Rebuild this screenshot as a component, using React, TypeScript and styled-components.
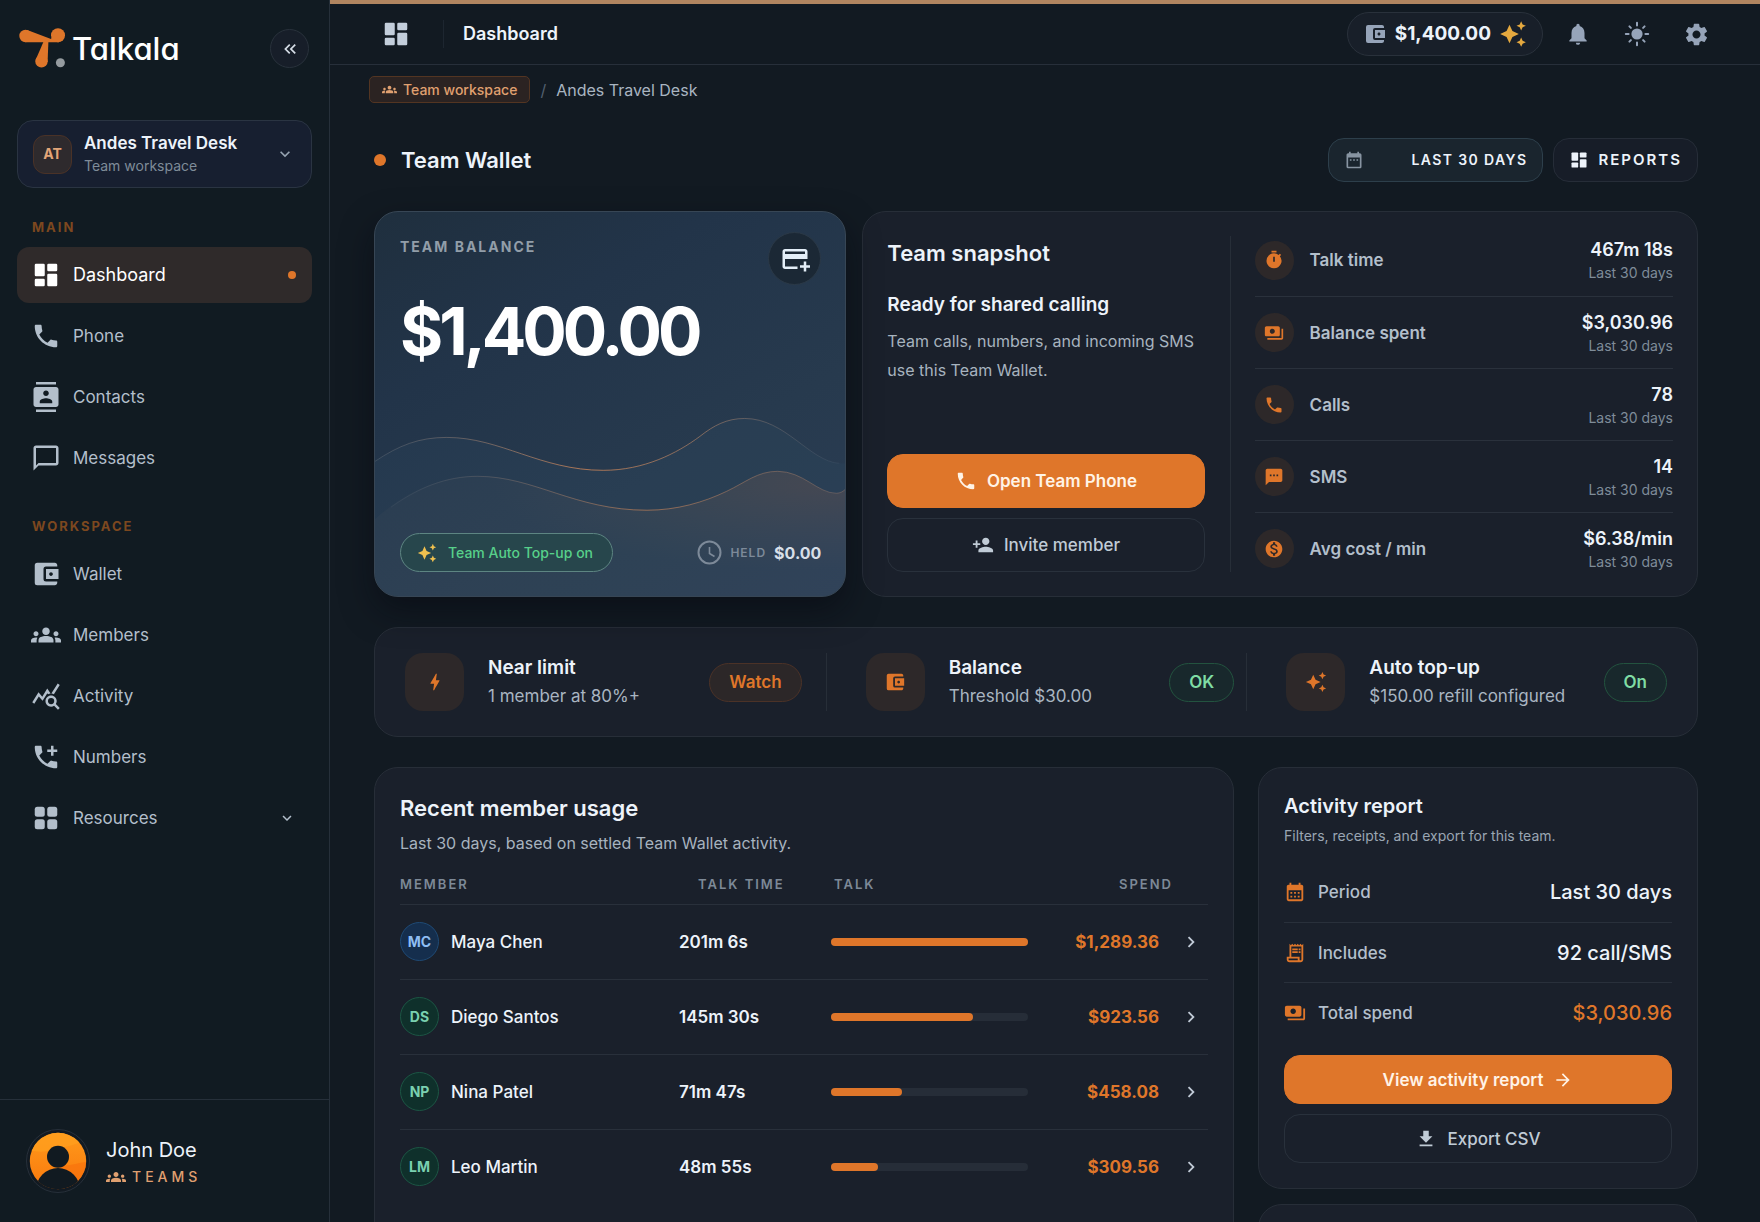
import React from "react";
import styled, { createGlobalStyle, css } from "styled-components";
import {
  MdAccountBalanceWallet,
  MdAddIcCall,
  MdArrowForward,
  MdAutoAwesome,
  MdBolt,
  MdCalendarMonth,
  MdChevronRight,
  MdContacts,
  MdDateRange,
  MdDownload,
  MdGroups,
  MdKeyboardArrowDown,
  MdKeyboardDoubleArrowLeft,
  MdMonetizationOn,
  MdNotifications,
  MdOutlineAddCard,
  MdOutlineChatBubbleOutline,
  MdOutlineReceiptLong,
  MdPayments,
  MdPersonAdd,
  MdPhone,
  MdQueryStats,
  MdSettings,
  MdSms,
  MdTimer,
} from "react-icons/md";

const c = {
  page: "#121a22",
  side: "#111b22",
  card: "#1a202b",
  line: "rgba(148, 163, 184, 0.16)",
  orange: "#df762a",
  peach: "#e0a070",
  white: "#edf3fa",
  text: "#b3bfcb",
  mute: "#7f8c99",
  warm: "#2d2829",
};

const GlobalStyle = createGlobalStyle`
  *, *::before, *::after { box-sizing: border-box; }
  body {
    margin: 0;
    background: ${c.page};
    color: ${c.white};
    font-family: Inter, "Liberation Sans", sans-serif;
    font-size: 16px;
    line-height: 24px;
    -webkit-font-smoothing: antialiased;
  }
  button, select { font: inherit; color: inherit; cursor: pointer; }
  h1, h2, h3, p, ul { margin: 0; padding: 0; }
  ul { list-style: none; }
  a { color: inherit; text-decoration: none; }
  svg { flex: none; display: block; }
`;

const Shell = styled.div`
  display: flex;
  height: 100vh;
  overflow: hidden;
`;

/* ---------- sidebar ---------- */

const Sidebar = styled.aside`
  width: 330px;
  flex: none;
  display: flex;
  flex-direction: column;
  background: ${c.side};
  border-right: 1px solid ${c.line};
`;

const Brand = styled.div`
  display: flex;
  align-items: center;
  justify-content: space-between;
  padding: 28px 20px 0 19px;
`;

const BrandLink = styled.a`
  display: flex;
  align-items: center;
  gap: 5px;
  font-size: 31px;
  line-height: 40px;
  font-weight: 500;
  color: #fff;
  font-feature-settings: "cv11";
`;

const Collapse = styled.button`
  width: 39px;
  height: 39px;
  padding: 0;
  display: grid;
  place-items: center;
  border-radius: 50%;
  border: 1px solid #29323c;
  background: #171e29;
  color: #d5dde6;
`;

const Workspace = styled.button`
  display: flex;
  align-items: center;
  gap: 12px;
  margin: 51px 17px 0;
  height: 68px;
  padding: 0 16px 0 15px;
  border-radius: 16px;
  border: 1px solid #2a3442;
  background: #171f30;
  text-align: left;
`;

const Initials = styled.span`
  width: 39px;
  height: 39px;
  display: grid;
  place-items: center;
  border-radius: 12px;
  border: 1px solid #4a3227;
  background: #2e2a2d;
  color: #e2a578;
  font-size: 14px;
  font-weight: 700;
`;

const WorkspaceText = styled.span`
  flex: 1;
  display: flex;
  flex-direction: column;
  font-size: 14px;
  line-height: 22px;
  color: ${c.mute};
  strong {
    font-size: 17px;
    line-height: 24px;
    font-weight: 600;
    color: ${c.white};
  }
`;

const NavLabel = styled.h2`
  padding: 0 32px;
  font-size: 13px;
  line-height: 20px;
  font-weight: 700;
  letter-spacing: 2px;
  text-transform: uppercase;
  color: #7d481f;
`;

const Nav = styled.nav`
  flex: 1;
  padding-top: 29px;
`;

const NavList = styled.ul`
  display: grid;
  gap: 5px;
  padding: 10px 17px 30px;
`;

const NavItem = styled.a<{ $active?: boolean }>`
  display: flex;
  align-items: center;
  gap: 12px;
  height: 56px;
  padding: 0 16px 0 14px;
  border-radius: 12px;
  font-size: ${(p) => (p.$active ? 18 : 17)}px;
  color: ${(p) => (p.$active ? "#fff" : c.text)};
  background: ${(p) => (p.$active ? "#2f2a2a" : "transparent")};
  span { flex: 1; }
`;

const Dot = styled.i<{ $size: number }>`
  width: ${(p) => p.$size}px;
  height: ${(p) => p.$size}px;
  border-radius: 50%;
  background: ${c.orange};
`;

const Profile = styled.div`
  display: flex;
  align-items: center;
  gap: 16px;
  height: 123px;
  padding: 0 26px;
  border-top: 1px solid ${c.line};
`;

const ProfileText = styled.div`
  padding-top: 3px;
  font-size: 20px;
  line-height: 28px;
  p {
    display: flex;
    align-items: center;
    gap: 6px;
    font-size: 14px;
    line-height: 26px;
    font-weight: 500;
    letter-spacing: 4px;
    color: ${c.peach};
  }
`;

/* ---------- top bar ---------- */

const Main = styled.main`
  flex: 1;
  min-width: 0;
  display: flex;
  flex-direction: column;
  border-top: 4px solid #b08560;
`;

const TopBar = styled.header`
  display: flex;
  align-items: center;
  flex: none;
  height: 61px;
  padding: 0 40px 0 38px;
  border-bottom: 1px solid ${c.line};
`;

const IconButton = styled.button<{ $w: number; $bright?: boolean }>`
  width: ${(p) => p.$w}px;
  height: 48px;
  padding: 0;
  display: grid;
  place-items: center;
  border: 0;
  background: none;
  color: ${(p) => (p.$bright ? "#c3cedb" : "#96a4b9")};
`;

const PageName = styled.div`
  flex: 1;
  margin-left: 19px;
  padding-left: 19px;
  border-left: 1px solid #1d2630;
  font-size: 18px;
  line-height: 28px;
  font-weight: 600;
`;

const TopActions = styled.div`
  display: flex;
  align-items: center;
  gap: 11px;
`;

const Funds = styled.button`
  display: flex;
  align-items: center;
  gap: 8px;
  height: 44px;
  padding: 0 15px;
  border-radius: 22px;
  border: 1px solid #29313b;
  background: #181f29;
  font-size: 19px;
  font-weight: 700;
  svg:first-child { color: #96a4b9; }
  svg:last-child { color: #e5a93f; }
`;

/* ---------- page ---------- */

const Scroll = styled.div`
  flex: 1;
  overflow-y: auto;
  scrollbar-width: none;
  padding: 11px 62px 0 44px;
`;

const Crumbs = styled.nav`
  display: flex;
  align-items: center;
  gap: 10px;
  margin-left: -5px;
  color: #a9b5c1;
  > span { color: #536070; }
`;

const CrumbChip = styled.a`
  display: flex;
  align-items: center;
  gap: 6px;
  height: 27px;
  padding: 0 12px;
  border-radius: 5px;
  border: 1px solid #533522;
  background: #2b2322;
  color: ${c.peach};
  font-size: 14px;
  font-weight: 500;
`;

const TitleRow = styled.div`
  display: flex;
  align-items: center;
  gap: 10px;
  margin: 35px 0 29px;
  h1 {
    flex: 1;
    margin-left: 5px;
    font-size: 22px;
    line-height: 32px;
    font-weight: 600;
  }
`;

const pillBox = css`
  display: flex;
  align-items: center;
  height: 44px;
  padding: 0 15px;
  border-radius: 16px;
  font-weight: 600;
  letter-spacing: 2px;
`;

const Range = styled.label`
  ${pillBox}
  width: 215px;
  border: 1px solid #2d3f4b;
  background: #1a252e;
  color: #8794a1;
  select {
    flex: 1;
    min-width: 0;
    padding: 0;
    border: 0;
    appearance: none;
    background: none;
    color: ${c.white};
    font-size: 14px;
    letter-spacing: 0.1em;
    text-align-last: right;
    text-transform: uppercase;
  }
`;

const Reports = styled.button`
  ${pillBox}
  gap: 9px;
  border: 1px solid #262d38;
  background: #171d28;
  font-size: 15px;
  text-transform: uppercase;
`;

const Card = styled.section`
  border: 1px solid #272e38;
  border-radius: 24px;
  background: ${c.card};
`;

const TopGrid = styled.div`
  display: grid;
  grid-template-columns: minmax(0, 13fr) minmax(0, 23fr);
  gap: 16px;
`;

const BalanceCard = styled.section`
  position: relative;
  display: flex;
  flex-direction: column;
  padding: 20px 24px 24px 25px;
  border-radius: 24px;
  border: 1px solid #374655;
  background: linear-gradient(150deg, #1f2f3e 0%, #223449 30%, #273a4e 65%, #2b3d54 100%);
  box-shadow: 0 14px 32px rgba(5, 8, 16, 0.5);
`;

const Waves = styled.svg`
  position: absolute;
  inset: 0;
  width: 100%;
  height: 100%;
  border-radius: 23px;
  pointer-events: none;
`;

const BalanceTop = styled.div`
  display: flex;
  justify-content: space-between;
  h2 {
    padding-top: 5px;
    font-size: 14px;
    line-height: 20px;
    font-weight: 700;
    letter-spacing: 2px;
    text-transform: uppercase;
    color: #929ea9;
  }
`;

const AddCard = styled.button`
  width: 53px;
  height: 53px;
  padding: 0;
  display: grid;
  place-items: center;
  border-radius: 50%;
  border: 1px solid #2b3947;
  background: #1b2835;
  color: #e3eef8;
`;

const Amount = styled.p`
  flex: 1;
  padding-top: 6px;
  font-size: 66px;
  line-height: 80px;
  font-weight: 700;
  letter-spacing: -4px;
  color: #fff;
`;

const BalanceFoot = styled.div`
  position: relative;
  display: flex;
  align-items: center;
  justify-content: space-between;
`;

const AutoChip = styled.span`
  display: flex;
  align-items: center;
  gap: 11px;
  height: 39px;
  padding: 0 19px 0 16px;
  border-radius: 20px;
  border: 1px solid #5d8582;
  background: #27464c;
  color: #57d08a;
  font-size: 14px;
  font-weight: 500;
  svg { color: #efc04f; }
`;

const Held = styled.span`
  display: flex;
  align-items: center;
  gap: 8px;
  font-size: 12px;
  font-weight: 600;
  letter-spacing: 1px;
  color: #7d8a99;
  strong {
    font-size: 16px;
    font-weight: 700;
    letter-spacing: 0;
    color: #d7dfe8;
  }
`;

const Snapshot = styled(Card)`
  display: grid;
  grid-template-columns: minmax(0, 343fr) minmax(0, 442fr);
  padding: 24px;
`;

const SnapIntro = styled.div`
  display: flex;
  flex-direction: column;
  padding-right: 25px;
  border-right: 1px solid #272e38;
  h2 { font-size: 22px; line-height: 34px; font-weight: 600; }
  h3 { margin-top: 21px; font-size: 19px; line-height: 28px; font-weight: 600; }
  p { flex: 1; margin-top: 8px; font-size: 16px; line-height: 29px; color: #a7b3bf; }
`;

const Action = styled.button<{ $primary?: boolean; $h: number }>`
  display: flex;
  align-items: center;
  justify-content: center;
  gap: 10px;
  width: 100%;
  height: ${(p) => p.$h}px;
  margin-top: 10px;
  border-radius: 16px;
  font-size: 17px;
  font-weight: ${(p) => (p.$primary ? 600 : 500)};
  border: 1px solid ${(p) => (p.$primary ? c.orange : "#29313c")};
  background: ${(p) => (p.$primary ? c.orange : "transparent")};
  color: ${(p) => (p.$primary ? "#fff3e6" : "#c0cbd6")};
`;

const StatList = styled.ul`
  padding-left: 24px;
`;

const Stat = styled.li`
  display: flex;
  align-items: center;
  gap: 16px;
  height: 72px;
  font-size: 17px;
  font-weight: 600;
  color: ${c.text};
  & + & { border-top: 1px solid #2a313c; }
  &:first-child { height: 60px; padding-bottom: 12px; }
  &:last-child { height: 60px; padding-top: 12px; }
  > span { flex: 1; }
`;

const RoundIcon = styled.i`
  width: 39px;
  height: 39px;
  flex: none;
  display: grid;
  place-items: center;
  border-radius: 50%;
  background: ${c.warm};
  color: ${c.orange};
`;

const StatValue = styled.div`
  text-align: right;
  font-size: 14px;
  line-height: 20px;
  font-weight: 400;
  color: ${c.mute};
  strong {
    display: block;
    font-size: 18px;
    line-height: 26px;
    font-weight: 600;
    color: ${c.white};
  }
`;

/* ---------- status strip ---------- */

const Strip = styled(Card)`
  display: grid;
  grid-template-columns: minmax(0, 71fr) minmax(0, 70fr) minmax(0, 71fr);
  margin: 30px 0;
  padding: 25px 24px;
`;

const StripItem = styled.div`
  display: flex;
  align-items: center;
  gap: 24px;
  padding: 0 24px 0 39px;
  & + & { border-left: 1px solid #272e38; }
  &:first-child { padding-left: 6px; }
  &:nth-child(2) { padding-right: 12px; }
  &:last-child { padding-right: 6px; }
`;

const SquareIcon = styled.i`
  width: 59px;
  height: 58px;
  flex: none;
  display: grid;
  place-items: center;
  border-radius: 18px;
  background: ${c.warm};
  color: ${c.orange};
`;

const StripText = styled.div`
  flex: 1;
  white-space: nowrap;
  font-size: 17px;
  line-height: 28px;
  color: #a9b5c1;
  h3 { font-size: 19px; line-height: 28px; font-weight: 600; color: ${c.white}; }
`;

const Badge = styled.span<{ $tone: "warn" | "ok" }>`
  height: 39px;
  padding: 0 19px;
  border-radius: 20px;
  font-size: 17px;
  line-height: 37px;
  font-weight: 600;
  ${(p) =>
    p.$tone === "warn"
      ? css`border: 1px solid #4b3227; background: #2c2728; color: ${c.orange};`
      : css`border: 1px solid #23533f; background: #18282c; color: #7fdca4;`}
`;

/* ---------- bottom ---------- */

const BottomGrid = styled.div`
  display: grid;
  grid-template-columns: minmax(0, 1fr) 440px;
  gap: 24px;
`;

const Usage = styled(Card)`
  padding: 24px 25px 40px;
  h2 { font-size: 22px; line-height: 33px; font-weight: 600; }
  p { margin-top: 4px; font-size: 16px; line-height: 28px; color: #a7b3bf; }
`;

const Table = styled.table`
  width: 100%;
  margin-top: 11px;
  table-layout: fixed;
  border-collapse: collapse;
  font-size: 17px;
  font-weight: 500;
  text-align: left;
  th {
    height: 36px;
    padding: 0 0 4px;
    font-size: 13px;
    font-weight: 600;
    letter-spacing: 2px;
    text-transform: uppercase;
    color: #7d8997;
    border-bottom: 1px solid #29303b;
  }
  th:nth-child(1) { width: 279px; }
  th:nth-child(2) { width: 152px; padding-left: 19px; }
  th:nth-child(3) { padding-left: 3px; }
  th:nth-child(4) { width: 145px; text-align: right; }
  th:nth-child(5) { width: 35px; }
  td { height: 75px; padding: 0; }
  tr + tr td { border-top: 1px solid #29303b; }
  td:nth-child(2) { font-weight: 600; }
  td:nth-child(4) {
    padding-right: 14px;
    text-align: right;
    font-weight: 700;
    color: ${c.orange};
  }
`;

const Member = styled.span`
  display: flex;
  align-items: center;
  gap: 12px;
`;

const Avatar = styled.i<{ $blue?: boolean }>`
  width: 39px;
  height: 39px;
  display: grid;
  place-items: center;
  border-radius: 50%;
  border: 1px solid ${(p) => (p.$blue ? "#1f4a75" : "#1c5644")};
  background: ${(p) => (p.$blue ? "#152e4d" : "#0f302b")};
  color: ${(p) => (p.$blue ? "#8ebdf3" : "#7ad0b0")};
  font-size: 14px;
  font-style: normal;
  font-weight: 700;
`;

const Track = styled.div`
  height: 8px;
  border-radius: 4px;
  background: #262d38;
`;

const Fill = styled.div`
  height: 100%;
  border-radius: 4px;
  background: ${c.orange};
`;

const RowLink = styled.button`
  width: 35px;
  height: 24px;
  padding: 0;
  display: grid;
  place-items: center;
  border: 0;
  background: none;
  color: #c0cad6;
`;

const Column = styled.div`
  display: grid;
  align-content: start;
  gap: 15px;
`;

const Report = styled(Card)`
  padding: 23px 25px 25px;
  h2 { font-size: 20px; line-height: 30px; font-weight: 600; }
  p { margin-top: 2px; font-size: 14px; line-height: 26px; color: #9aa6b3; }
`;

const ReportList = styled.ul`
  padding: 13px 0 3px;
`;

const ReportRow = styled.li<{ $hot?: boolean }>`
  display: flex;
  align-items: center;
  gap: 12px;
  height: 60px;
  font-size: 17px;
  font-weight: 500;
  color: ${c.text};
  & + & { border-top: 1px solid #29303b; }
  svg { color: ${c.orange}; }
  span { flex: 1; }
  strong {
    font-size: 20px;
    font-weight: 500;
    color: ${(p) => (p.$hot ? c.orange : c.white)};
  }
`;

const NextCard = styled(Card)`
  height: 200px;
`;

/* ---------- drawings ---------- */

const DashIcon = ({ size }: { size: number }) => (
  <svg width={size} height={size} viewBox="0 0 24 24" fill="currentColor" aria-hidden="true">
    <rect x="3" y="3" width="8" height="10" rx="1" />
    <rect x="13" y="3" width="8" height="6" rx="1" />
    <rect x="3" y="15" width="8" height="6" rx="1" />
    <rect x="13" y="11" width="8" height="10" rx="1" />
  </svg>
);

const GridIcon = ({ size }: { size: number }) => (
  <svg width={size} height={size} viewBox="0 0 24 24" fill="currentColor" aria-hidden="true">
    <rect x="3" y="3" width="8" height="8" rx="2" />
    <rect x="13" y="3" width="8" height="8" rx="2" />
    <rect x="3" y="13" width="8" height="8" rx="2" />
    <rect x="13" y="13" width="8" height="8" rx="2" />
  </svg>
);

const SunIcon = () => (
  <svg width="26" height="26" viewBox="0 0 26 26" fill="currentColor" aria-hidden="true">
    <circle cx="13" cy="13" r="5.6" />
    <path
      d="M13 1.8v2.8M13 21.4v2.8M1.8 13h2.8M21.4 13h2.8M5.4 5.4l1.5 1.5M19.1 19.1l1.5 1.5M5.4 20.6l1.5-1.5M19.1 6.9l1.5-1.5"
      stroke="currentColor"
      strokeWidth="2"
      strokeLinecap="round"
    />
  </svg>
);

const Logo = () => (
  <svg width="48" height="41" viewBox="0 0 48 41" aria-hidden="true">
    <g fill={c.orange}>
      <circle cx="6.5" cy="8" r="6.2" />
      <path d="M8.2 2.1 L32 11 L33 9 H40 V14.2 H6.5 V8Z" />
      <circle cx="39" cy="7.2" r="7" />
      <path d="M24.6 13.5 H29.4 L28.6 34 L16.4 32.4Z" />
      <circle cx="22.5" cy="33.4" r="6.2" />
    </g>
    <circle cx="41.4" cy="34.8" r="4.5" fill="#959b9f" />
  </svg>
);

const ProfilePicture = () => (
  <svg width="64" height="64" viewBox="0 0 64 64" role="img" aria-label="John Doe">
    <defs>
      <linearGradient id="pic" x1="0" y1="0" x2="0" y2="1">
        <stop offset="0" stopColor="#ff9c1c" />
        <stop offset="1" stopColor="#f9760c" />
      </linearGradient>
      <clipPath id="disc"><circle cx="32" cy="32" r="28.2" /></clipPath>
    </defs>
    <circle cx="32" cy="32" r="31.5" fill="#121a22" stroke="#27303a" />
    <g clipPath="url(#disc)">
      <rect width="64" height="64" fill="url(#pic)" />
      <path d="M0 20C14 25 24 22 36 19S54 13 64 12V0H0Z" fill="#ff9f1e" opacity=".7" />
      <path d="M34 36C44 38 52 33 64 33V64H34Z" fill="#f9700c" opacity=".6" />
      <circle cx="32" cy="27.8" r="11" fill="#111a21" />
      <circle cx="32" cy="61" r="22" fill="#111a21" />
      <rect y="52" width="64" height="12" fill="#111a21" />
    </g>
  </svg>
);

const BalanceWaves = () => (
  <Waves viewBox="0 0 472 385" preserveAspectRatio="none" aria-hidden="true">
    <defs>
      <linearGradient id="stroke" x1="0" x2="1">
        <stop offset="0" stopColor="#8a8f96" stopOpacity=".25" />
        <stop offset=".45" stopColor="#d98a58" stopOpacity=".75" />
        <stop offset=".7" stopColor="#c08a68" stopOpacity=".6" />
        <stop offset="1" stopColor="#7a8896" stopOpacity=".1" />
      </linearGradient>
      <linearGradient id="low" x1="0" x2="1">
        <stop offset="0" stopColor="#7a8896" stopOpacity=".1" />
        <stop offset=".55" stopColor="#d98a58" stopOpacity=".6" />
        <stop offset="1" stopColor="#a08070" stopOpacity=".35" />
      </linearGradient>
      <radialGradient id="glow" cx=".95" cy=".1" r=".7">
        <stop offset="0" stopColor="#c07048" stopOpacity=".18" />
        <stop offset="1" stopColor="#8a7a70" stopOpacity=".05" />
      </radialGradient>
    </defs>
    <path
      d="M0 250C24 234 44 226 72 226C126 226 166 259 229 259C270 259 303 242 326 225C340 214 353 207 371 207C412 207 436 250 466 252L472 252V385H0Z"
      fill="#3f6480"
      opacity=".1"
    />
    <path
      d="M0 308C34 278 68 265 103 265C160 265 200 299 273 299C303 299 330 291 353 280C372 271 384 260 404 260C430 260 444 282 463 282C467 282 470 280 472 278V385H0Z"
      fill="url(#glow)"
    />
    <path
      d="M0 250C24 234 44 226 72 226C126 226 166 259 229 259C270 259 303 242 326 225C340 214 353 207 371 207C412 207 436 250 466 252"
      fill="none"
      stroke="url(#stroke)"
    />
    <path
      d="M16 296C44 276 72 265 103 265C160 265 200 299 273 299C303 299 330 291 353 280C372 271 384 260 404 260C430 260 444 282 463 282C467 282 470 280 472 278"
      fill="none"
      stroke="url(#low)"
    />
  </Waves>
);

const ClockIcon = () => (
  <svg width="25" height="25" viewBox="0 0 25 25" fill="none" stroke="currentColor" strokeWidth="2" aria-hidden="true">
    <circle cx="12.5" cy="12.5" r="11" />
    <path d="M12.5 7v6.5l5 3" strokeWidth="1.6" />
  </svg>
);

/* ---------- data ---------- */

const mainNav = [
  { label: "Dashboard", icon: <DashIcon size={30} />, active: true },
  { label: "Phone", icon: <MdPhone size={30} /> },
  { label: "Contacts", icon: <MdContacts size={30} /> },
  { label: "Messages", icon: <MdOutlineChatBubbleOutline size={30} /> },
];

const workspaceNav = [
  { label: "Wallet", icon: <MdAccountBalanceWallet size={30} /> },
  { label: "Members", icon: <MdGroups size={30} /> },
  { label: "Activity", icon: <MdQueryStats size={30} /> },
  { label: "Numbers", icon: <MdAddIcCall size={30} /> },
  { label: "Resources", icon: <GridIcon size={30} />, more: true },
];

const stats = [
  { label: "Talk time", value: "467m 18s", icon: <MdTimer size={20} /> },
  { label: "Balance spent", value: "$3,030.96", icon: <MdPayments size={20} /> },
  { label: "Calls", value: "78", icon: <MdPhone size={20} /> },
  { label: "SMS", value: "14", icon: <MdSms size={20} /> },
  { label: "Avg cost / min", value: "$6.38/min", icon: <MdMonetizationOn size={20} /> },
];

const members = [
  { initials: "MC", name: "Maya Chen", time: "201m 6s", share: 100, spend: "$1,289.36" },
  { initials: "DS", name: "Diego Santos", time: "145m 30s", share: 72, spend: "$923.56" },
  { initials: "NP", name: "Nina Patel", time: "71m 47s", share: 36, spend: "$458.08" },
  { initials: "LM", name: "Leo Martin", time: "48m 55s", share: 24, spend: "$309.56" },
];

type NavEntry = { label: string; icon: React.ReactNode; active?: boolean; more?: boolean };

const NavGroup = ({ title, items }: { title: string; items: NavEntry[] }) => (
  <>
    <NavLabel>{title}</NavLabel>
    <NavList>
      {items.map((it) => (
        <li key={it.label}>
          <NavItem href="#" $active={it.active}>
            {it.icon}
            <span>{it.label}</span>
            {it.active && <Dot $size={8} />}
            {it.more && <MdKeyboardArrowDown size={18} />}
          </NavItem>
        </li>
      ))}
    </NavList>
  </>
);

export default function App() {
  return (
    <Shell>
      <GlobalStyle />
      <Sidebar>
        <Brand>
          <BrandLink href="#"><Logo />Talkala</BrandLink>
          <Collapse aria-label="Collapse sidebar"><MdKeyboardDoubleArrowLeft size={20} /></Collapse>
        </Brand>
        <Workspace>
          <Initials>AT</Initials>
          <WorkspaceText><strong>Andes Travel Desk</strong>Team workspace</WorkspaceText>
          <MdKeyboardArrowDown size={20} color="#96a3b1" />
        </Workspace>
        <Nav>
          <NavGroup title="Main" items={mainNav} />
          <NavGroup title="Workspace" items={workspaceNav} />
        </Nav>
        <Profile>
          <ProfilePicture />
          <ProfileText>
            John Doe
            <p><MdGroups size={20} />TEAMS</p>
          </ProfileText>
        </Profile>
      </Sidebar>

      <Main>
        <TopBar>
          <IconButton $w={56} $bright aria-label="Dashboard"><DashIcon size={30} /></IconButton>
          <PageName>Dashboard</PageName>
          <TopActions>
            <Funds><MdAccountBalanceWallet size={24} />$1,400.00<MdAutoAwesome size={28} /></Funds>
            <IconButton $w={48} aria-label="Notifications"><MdNotifications size={26} /></IconButton>
            <IconButton $w={48} aria-label="Theme"><SunIcon /></IconButton>
            <IconButton $w={48} aria-label="Settings"><MdSettings size={27} /></IconButton>
          </TopActions>
        </TopBar>

        <Scroll>
          <Crumbs aria-label="Breadcrumb">
            <CrumbChip href="#"><MdGroups size={15} />Team workspace</CrumbChip>
            <span>/</span>
            <a href="#">Andes Travel Desk</a>
          </Crumbs>

          <TitleRow>
            <Dot $size={12} />
            <h1>Team Wallet</h1>
            <Range>
              <MdDateRange size={20} />
              <select aria-label="Period" defaultValue="30">
                <option value="30">Last 30 days</option>
              </select>
            </Range>
            <Reports><DashIcon size={20} />Reports</Reports>
          </TitleRow>

          <TopGrid>
            <BalanceCard>
              <BalanceWaves />
              <BalanceTop>
                <h2>Team balance</h2>
                <AddCard aria-label="Add card"><MdOutlineAddCard size={30} /></AddCard>
              </BalanceTop>
              <Amount>$1,400.00</Amount>
              <BalanceFoot>
                <AutoChip><MdAutoAwesome size={20} />Team Auto Top-up on</AutoChip>
                <Held><ClockIcon />HELD <strong>$0.00</strong></Held>
              </BalanceFoot>
            </BalanceCard>

            <Snapshot>
              <SnapIntro>
                <h2>Team snapshot</h2>
                <h3>Ready for shared calling</h3>
                <p>Team calls, numbers, and incoming SMS use this Team Wallet.</p>
                <Action $primary $h={54}><MdPhone size={22} />Open Team Phone</Action>
                <Action $h={54}><MdPersonAdd size={22} />Invite member</Action>
              </SnapIntro>
              <StatList>
                {stats.map((s) => (
                  <Stat key={s.label}>
                    <RoundIcon>{s.icon}</RoundIcon>
                    <span>{s.label}</span>
                    <StatValue><strong>{s.value}</strong>Last 30 days</StatValue>
                  </Stat>
                ))}
              </StatList>
            </Snapshot>
          </TopGrid>

          <Strip>
            <StripItem>
              <SquareIcon><MdBolt size={22} /></SquareIcon>
              <StripText><h3>Near limit</h3>1 member at 80%+</StripText>
              <Badge $tone="warn">Watch</Badge>
            </StripItem>
            <StripItem>
              <SquareIcon><MdAccountBalanceWallet size={22} /></SquareIcon>
              <StripText><h3>Balance</h3>Threshold $30.00</StripText>
              <Badge $tone="ok">OK</Badge>
            </StripItem>
            <StripItem>
              <SquareIcon><MdAutoAwesome size={22} /></SquareIcon>
              <StripText><h3>Auto top-up</h3>$150.00 refill configured</StripText>
              <Badge $tone="ok">On</Badge>
            </StripItem>
          </Strip>

          <BottomGrid>
            <Usage>
              <h2>Recent member usage</h2>
              <p>Last 30 days, based on settled Team Wallet activity.</p>
              <Table>
                <thead>
                  <tr>
                    <th>Member</th>
                    <th>Talk time</th>
                    <th>Talk</th>
                    <th>Spend</th>
                    <th aria-label="Open" />
                  </tr>
                </thead>
                <tbody>
                  {members.map((m, i) => (
                    <tr key={m.name}>
                      <td><Member><Avatar $blue={i === 0}>{m.initials}</Avatar>{m.name}</Member></td>
                      <td>{m.time}</td>
                      <td><Track><Fill style={{ width: `${m.share}%` }} /></Track></td>
                      <td>{m.spend}</td>
                      <td><RowLink aria-label={`Open ${m.name}`}><MdChevronRight size={22} /></RowLink></td>
                    </tr>
                  ))}
                </tbody>
              </Table>
            </Usage>

            <Column>
              <Report>
                <h2>Activity report</h2>
                <p>Filters, receipts, and export for this team.</p>
                <ReportList>
                  <ReportRow><MdCalendarMonth size={22} /><span>Period</span><strong>Last 30 days</strong></ReportRow>
                  <ReportRow><MdOutlineReceiptLong size={22} /><span>Includes</span><strong>92 call/SMS</strong></ReportRow>
                  <ReportRow $hot><MdPayments size={22} /><span>Total spend</span><strong>$3,030.96</strong></ReportRow>
                </ReportList>
                <Action $primary $h={49}>View activity report<MdArrowForward size={20} /></Action>
                <Action $h={49}><MdDownload size={22} />Export CSV</Action>
              </Report>
              <NextCard />
            </Column>
          </BottomGrid>
        </Scroll>
      </Main>
    </Shell>
  );
}
